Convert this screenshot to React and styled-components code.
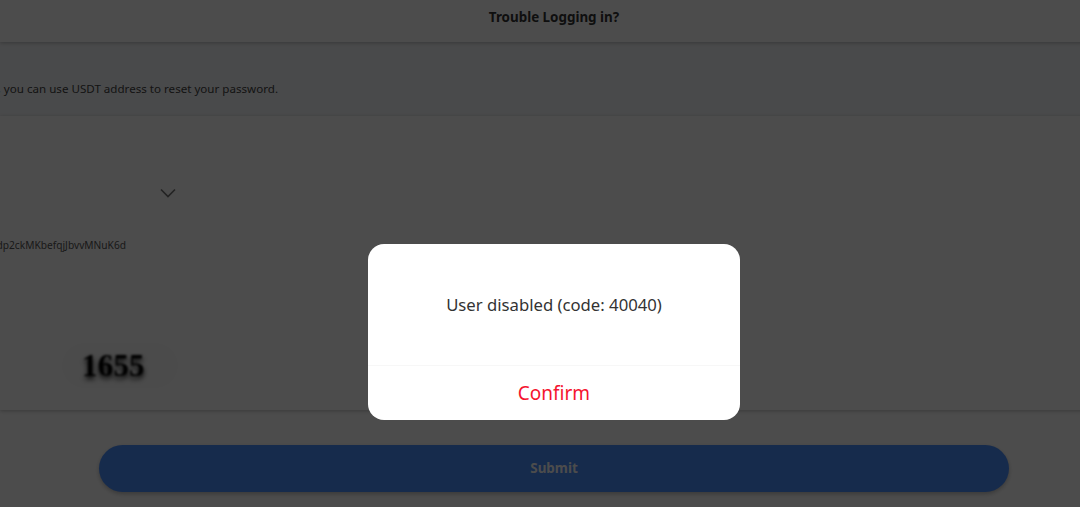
import React from "react";
import styled, { createGlobalStyle } from "styled-components";

const GlobalStyle = createGlobalStyle`
  html, body {
    margin: 0;
    height: 100%;
    overflow: hidden;
    background: #fff;
  }
  * {
    box-sizing: border-box;
  }
`;

const Page = styled.div`
  position: relative;
  width: 1108px;
  height: 664px;
  background: #fff;
  font-family: "Noto Sans", "Open Sans", sans-serif;
  color: #222;
`;

const Header = styled.header`
  height: 42px;
  display: flex;
  align-items: center;
  justify-content: center;
  padding-bottom: 8px;
  background: #fff;
  box-shadow: 0 1px 4px rgba(0, 0, 0, 0.25);
  font-size: 13.4px;
  font-weight: 700;
  color: #333;
  position: relative;
`;

const Notice = styled.div`
  height: 74px;
  display: flex;
  align-items: center;
  padding-top: 18px;
  background: #f6f8fb;
`;

const ClippedLine = styled.p`
  margin: 0;
  width: ${(p) => p.$end}px;
  display: flex;
  justify-content: flex-end;
  white-space: nowrap;
  font-size: ${(p) => p.$size}px;
  color: ${(p) => p.$color};
`;

const Form = styled.section`
  height: 294px;
  background: #fff;
  box-shadow: 0 1px 4px rgba(0, 0, 0, 0.25);
  position: relative;
`;

const SelectRow = styled.div`
  height: 120px;
  width: 176px;
  display: flex;
  justify-content: flex-end;
  align-items: flex-end;
  padding-bottom: 38px;
  color: #777;
`;

const AddressRow = styled.div`
  padding-top: 2px;
  height: 107px;
`;

const CaptchaRow = styled.div`
  display: flex;
  padding-left: 62px;
`;

const Captcha = styled.div`
  width: 116px;
  height: 45px;
  border-radius: 23px;
  background: #fbfbfb;
  display: flex;
  align-items: center;
  padding-left: 20px;
`;

const CaptchaText = styled.span`
  font-family: "Liberation Serif", serif;
  font-weight: 700;
  font-size: 31px;
  letter-spacing: 0.2px;
  color: #000;
  text-shadow: 0 3px 5px #000;
  filter: blur(0.8px);
`;

const Actions = styled.div`
  padding: 35px 99px 0;
`;

const Submit = styled.button`
  display: block;
  width: 910px;
  height: 47px;
  padding: 0 0 2px;
  border: 0;
  border-radius: 24px;
  background: #4a8fff;
  color: #fff;
  font-family: inherit;
  font-size: 13.4px;
  font-weight: 700;
  box-shadow: 0 2px 4px rgba(0, 0, 0, 0.25);
`;

const Overlay = styled.div`
  position: absolute;
  inset: 0;
  display: flex;
  align-items: center;
  justify-content: center;
  background: rgba(0, 0, 0, 0.7);
`;

const Dialog = styled.div`
  width: 372px;
  height: 176px;
  border-radius: 16px;
  background: #fff;
  display: flex;
  flex-direction: column;
`;

const Message = styled.div`
  height: 122px;
  display: flex;
  justify-content: center;
  padding-top: 50px;
  font-size: 16.7px;
  line-height: 22px;
  color: #333;
  border-bottom: 1px solid #f7f7f7;
`;

const Confirm = styled.div`
  flex: 1;
  display: flex;
  align-items: center;
  justify-content: center;
  font-size: 19px;
  color: #f5142f;
`;

function Chevron() {
  return (
    <svg width="16" height="10" viewBox="0 0 16 10" fill="none">
      <path d="M1 1.5 8 8.5 15 1.5" stroke="currentColor" strokeWidth="1.7" />
    </svg>
  );
}

export default function App() {
  return (
    <Page>
      <GlobalStyle />
      <Header>Trouble Logging in?</Header>
      <Notice>
        <ClippedLine $end={278} $size={11.6} $color="#444">
          If you forgot your password, you can use USDT address to reset your password.
        </ClippedLine>
      </Notice>
      <Form>
        <SelectRow>
          <Chevron />
        </SelectRow>
        <AddressRow>
          <ClippedLine $end={126} $size={10.2} $color="#555">
            TQn9Y2khEsLJW1ChVWFMSMeRDow5Kcdp2ckMKbefqjJbvvMNuK6d
          </ClippedLine>
        </AddressRow>
        <CaptchaRow>
          <Captcha>
            <CaptchaText>1655</CaptchaText>
          </Captcha>
        </CaptchaRow>
      </Form>
      <Actions>
        <Submit>Submit</Submit>
      </Actions>
      <Overlay>
        <Dialog>
          <Message>User disabled (code: 40040)</Message>
          <Confirm>Confirm</Confirm>
        </Dialog>
      </Overlay>
    </Page>
  );
}
